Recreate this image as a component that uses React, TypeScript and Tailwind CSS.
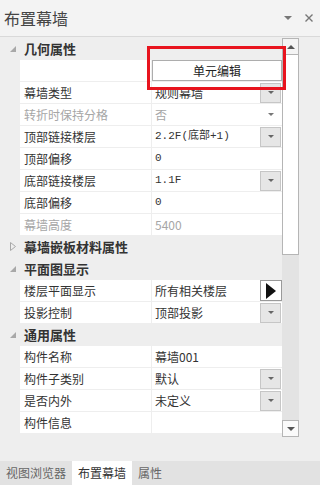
import React from "react";

type Row =
  | { kind: "cat"; label: string; open: boolean }
  | {
      kind: "prop";
      label: string;
      value?: string;
      ctrl?: "drop" | "arrow" | "play" | "button";
      disabled?: boolean;
      mono?: boolean;
    };

const rows: Row[] = [
  { kind: "cat", label: "几何属性", open: true },
  { kind: "prop", label: "", value: "单元编辑", ctrl: "button" },
  { kind: "prop", label: "幕墙类型", value: "规则幕墙", ctrl: "drop" },
  { kind: "prop", label: "转折时保持分格", value: "否", ctrl: "arrow", disabled: true },
  { kind: "prop", label: "顶部链接楼层", value: "2.2F(底部+1)", ctrl: "drop", mono: true },
  { kind: "prop", label: "顶部偏移", value: "0", mono: true },
  { kind: "prop", label: "底部链接楼层", value: "1.1F", ctrl: "drop", mono: true },
  { kind: "prop", label: "底部偏移", value: "0", mono: true },
  { kind: "prop", label: "幕墙高度", value: "5400", disabled: true },
  { kind: "cat", label: "幕墙嵌板材料属性", open: false },
  { kind: "cat", label: "平面图显示", open: true },
  { kind: "prop", label: "楼层平面显示", value: "所有相关楼层", ctrl: "play" },
  { kind: "prop", label: "投影控制", value: "顶部投影", ctrl: "drop" },
  { kind: "cat", label: "通用属性", open: true },
  { kind: "prop", label: "构件名称", value: "幕墙001" },
  { kind: "prop", label: "构件子类别", value: "默认", ctrl: "drop" },
  { kind: "prop", label: "是否内外", value: "未定义", ctrl: "drop" },
  { kind: "prop", label: "构件信息", value: "" },
];

function DownArrow({ color = "#666" }: { color?: string }) {
  return (
    <svg width="6" height="3" viewBox="0 0 6 3">
      <polygon points="0,0 6,0 3,3" fill={color} />
    </svg>
  );
}

function CatIcon({ open }: { open: boolean }) {
  return open ? (
    <svg width="6" height="6" viewBox="0 0 6 6">
      <polygon points="6,0 6,6 0,6" fill="#a8a8a8" />
    </svg>
  ) : (
    <svg width="6" height="9" viewBox="0 0 6 9">
      <polygon points="0.5,0.5 5.5,4.5 0.5,8.5" fill="none" stroke="#a8a8a8" />
    </svg>
  );
}

function PropRow({ row }: { row: Extract<Row, { kind: "prop" }> }) {
  const text = row.disabled ? "text-[#a6a6a6]" : "text-[#333]";
  const valueFont = row.mono
    ? "font-['Liberation_Mono','Noto_Sans_CJK_SC',monospace] text-[11px]"
    : "text-[12px]";
  return (
    <div className="flex h-[21px] pl-[20px]">
      <div className={`flex w-[131px] items-center bg-white pl-[4px] text-[12px] ${text}`}>
        {row.label}
      </div>
      <div className="ml-[1px] flex w-[130px] items-center bg-white">
        {row.ctrl === "button" ? (
          <div className="flex h-full w-full items-center justify-center border border-[#adadad] bg-white text-[12px] text-[#222]">
            {row.value}
          </div>
        ) : (
          <>
            <span className={`flex-1 pl-[3px] ${valueFont} ${text}`}>{row.value}</span>
            {row.ctrl === "drop" && (
              <div className="mr-[1px] flex h-[20px] w-[21px] items-center justify-center border border-[#c6c6c6] bg-[#e6e6e6]">
                <DownArrow />
              </div>
            )}
            {row.ctrl === "arrow" && (
              <div className="mr-[1px] flex h-[20px] w-[21px] items-center justify-center">
                <DownArrow color="#777" />
              </div>
            )}
            {row.ctrl === "play" && (
              <div className="mr-[0px] flex h-[21px] w-[22px] items-center justify-center border border-[#9a9a9a] bg-white">
                <svg width="10" height="16" viewBox="0 0 10 16">
                  <polygon points="0,0 10,8 0,16" fill="#111" />
                </svg>
              </div>
            )}
          </>
        )}
      </div>
    </div>
  );
}

export default function App() {
  return (
    <div className="relative flex h-[485px] w-[320px] flex-col overflow-hidden bg-[#eeeeee] font-['Noto_Sans_CJK_SC','Liberation_Sans',sans-serif] leading-none">
      {/* title bar */}
      <div className="flex h-[37px] shrink-0 items-center border-b border-[#d9d9d9] bg-[#f3f3f3] pl-[4px] pr-[7px]">
        <span className="flex-1 text-[16px] text-[#444]">布置幕墙</span>
        <svg width="8" height="4" viewBox="0 0 8 4" className="mr-[13px]">
          <polygon points="0,0 8,0 4,4" fill="#777" />
        </svg>
        <svg width="8" height="8" viewBox="0 0 8 8">
          <path d="M0.5 0.5 L7.5 7.5 M7.5 0.5 L0.5 7.5" stroke="#777" strokeWidth="1.4" />
        </svg>
      </div>

      {/* grid + scrollbar */}
      <div className="flex">
        <div className="flex w-[282px] flex-col gap-[1px] pt-[1px]">
          {rows.map((row, i) =>
            row.kind === "cat" ? (
              <div key={i} className="flex h-[21px] items-center">
                <div className="flex w-[20px] justify-center pl-[5px]">
                  <CatIcon open={row.open} />
                </div>
                <span className="pl-[4px] text-[13px] font-bold text-[#333]">{row.label}</span>
              </div>
            ) : (
              <PropRow key={i} row={row} />
            )
          )}
        </div>
        <div className="flex w-[17px] flex-col pt-[1px]">
          <div className="flex h-[17px] items-center justify-center border border-[#b5b5b5] bg-[#f4f4f4]">
            <svg width="8" height="4" viewBox="0 0 8 4">
              <polygon points="0,4 8,4 4,0" fill="#555" />
            </svg>
          </div>
          <div className="h-[200px] border border-t-0 border-[#b5b5b5] bg-white" />
          <div className="h-[165px] bg-[#e3e3e3]" />
          <div className="flex h-[17px] items-center justify-center border border-[#b5b5b5] bg-[#fafafa]">
            <svg width="8" height="4" viewBox="0 0 8 4">
              <polygon points="0,0 8,0 4,4" fill="#555" />
            </svg>
          </div>
        </div>
      </div>

      <div className="flex-1" />

      {/* tabs */}
      <div className="flex h-[24px] shrink-0 items-stretch bg-[#e2e2e2] text-[12px]">
        <div className="flex items-center px-[6px] text-[#666]">视图浏览器</div>
        <div className="flex items-center bg-white px-[6px] text-[#333]">布置幕墙</div>
        <div className="flex items-center px-[6px] text-[#666]">属性</div>
      </div>

      {/* annotation */}
      <div className="absolute left-[147px] top-[46px] h-[44px] w-[139px] border-[3px] border-[#e8141e]" />
    </div>
  );
}
